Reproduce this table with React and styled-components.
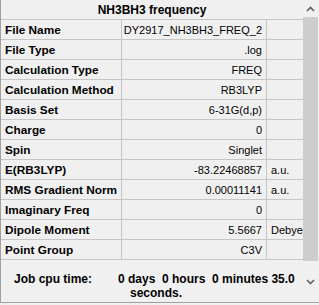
import React from 'react';
import styled, { createGlobalStyle } from 'styled-components';

const GlobalStyle = createGlobalStyle`
  html, body {
    margin: 0;
    padding: 0;
    background: #f0f0f0;
  }
  body {
    font-family: "Liberation Sans", Arial, sans-serif;
    font-size: 11px;
    color: #000;
  }
`;

const Panel = styled.div`
  width: 319px;
  height: 303px;
  box-sizing: border-box;
  border-left: 1px solid #a0a0a0;
  border-bottom: 1px solid #a0a0a0;
  display: flex;
  background: #f0f0f0;
`;

const Body = styled.div`
  flex: 1;
  display: flex;
  flex-direction: column;
  min-width: 0;
`;

const Title = styled.div`
  height: 19px;
  border-bottom: 1px solid #c6c6c6;
  display: flex;
  align-items: center;
  justify-content: center;
  font-weight: bold;
  font-size: 12px;
`;

const Grid = styled.div`
  display: grid;
  grid-template-columns: 121px 145px 1fr;
  grid-auto-rows: 20px;
`;

const Cell = styled.div`
  box-sizing: border-box;
  border-bottom: 1px solid #c6c6c6;
  border-right: ${p => (p.$last ? 'none' : '1px solid #c6c6c6')};
  display: flex;
  align-items: center;
  white-space: nowrap;
  overflow: hidden;
  padding: ${p => (p.$align === 'right' ? '0 4px 0 0' : '0 0 0 4px')};
  justify-content: ${p => (p.$align === 'right' ? 'flex-end' : 'flex-start')};
  font-weight: ${p => (p.$bold ? 'bold' : 'normal')};
  font-size: ${p => (p.$bold ? '11.8px' : '11px')};
`;

const Footer = styled.div`
  flex: 1;
  display: flex;
  flex-direction: column;
  justify-content: center;
  padding: 10px 0 0 13px;
  font-weight: bold;
  font-size: 12px;
  line-height: 14px;
`;

const FooterLine = styled.div`
  display: flex;
  white-space: pre;
  padding-left: ${p => p.$indent || 0}px;
`;

const FooterLabel = styled.span`
  width: 104px;
`;

const ScrollBar = styled.div`
  width: 15px;
  margin-right: 1px;
  display: flex;
  flex-direction: column;
  align-items: stretch;
`;

const Arrow = styled.div`
  height: 17px;
  display: flex;
  align-items: center;
  justify-content: center;
`;

const Thumb = styled.div`
  flex: 1;
  background: #cdcdcd;
  margin-bottom: 12px;
`;

const Track = styled.div`
  height: 12px;
`;

const Chevron = ({ up }) => (
  <svg width="9" height="6" viewBox="0 0 9 6">
    <path
      d={up ? 'M1 5 L4.5 1.5 L8 5' : 'M1 1 L4.5 4.5 L8 1'}
      fill="none"
      stroke="#606060"
      strokeWidth="1.6"
    />
  </svg>
);

const rows = [
  ['File Name', 'DY2917_NH3BH3_FREQ_2', ''],
  ['File Type', '.log', ''],
  ['Calculation Type', 'FREQ', ''],
  ['Calculation Method', 'RB3LYP', ''],
  ['Basis Set', '6-31G(d,p)', ''],
  ['Charge', '0', ''],
  ['Spin', 'Singlet', ''],
  ['E(RB3LYP)', '-83.22468857', 'a.u.'],
  ['RMS Gradient Norm', '0.00011141', 'a.u.'],
  ['Imaginary Freq', '0', ''],
  ['Dipole Moment', '5.5667', 'Debye'],
  ['Point Group', 'C3V', ''],
];

export default function App() {
  return (
    <>
      <GlobalStyle />
      <Panel>
        <Body>
          <Title>NH3BH3 frequency</Title>
          <Grid>
            {rows.map(([label, value, unit]) => (
              <React.Fragment key={label}>
                <Cell $bold>{label}</Cell>
                <Cell $align="right">{value}</Cell>
                <Cell $last>{unit}</Cell>
              </React.Fragment>
            ))}
          </Grid>
          <Footer>
            <FooterLine>
              <FooterLabel>Job cpu time:</FooterLabel>
              <span>0 days  0 hours  0 minutes 35.0</span>
            </FooterLine>
            <FooterLine $indent={116}>seconds.</FooterLine>
          </Footer>
        </Body>
        <ScrollBar>
          <Arrow><Chevron up /></Arrow>
          <Thumb />
          <Arrow><Chevron /></Arrow>
          <Track />
        </ScrollBar>
      </Panel>
    </>
  );
}
